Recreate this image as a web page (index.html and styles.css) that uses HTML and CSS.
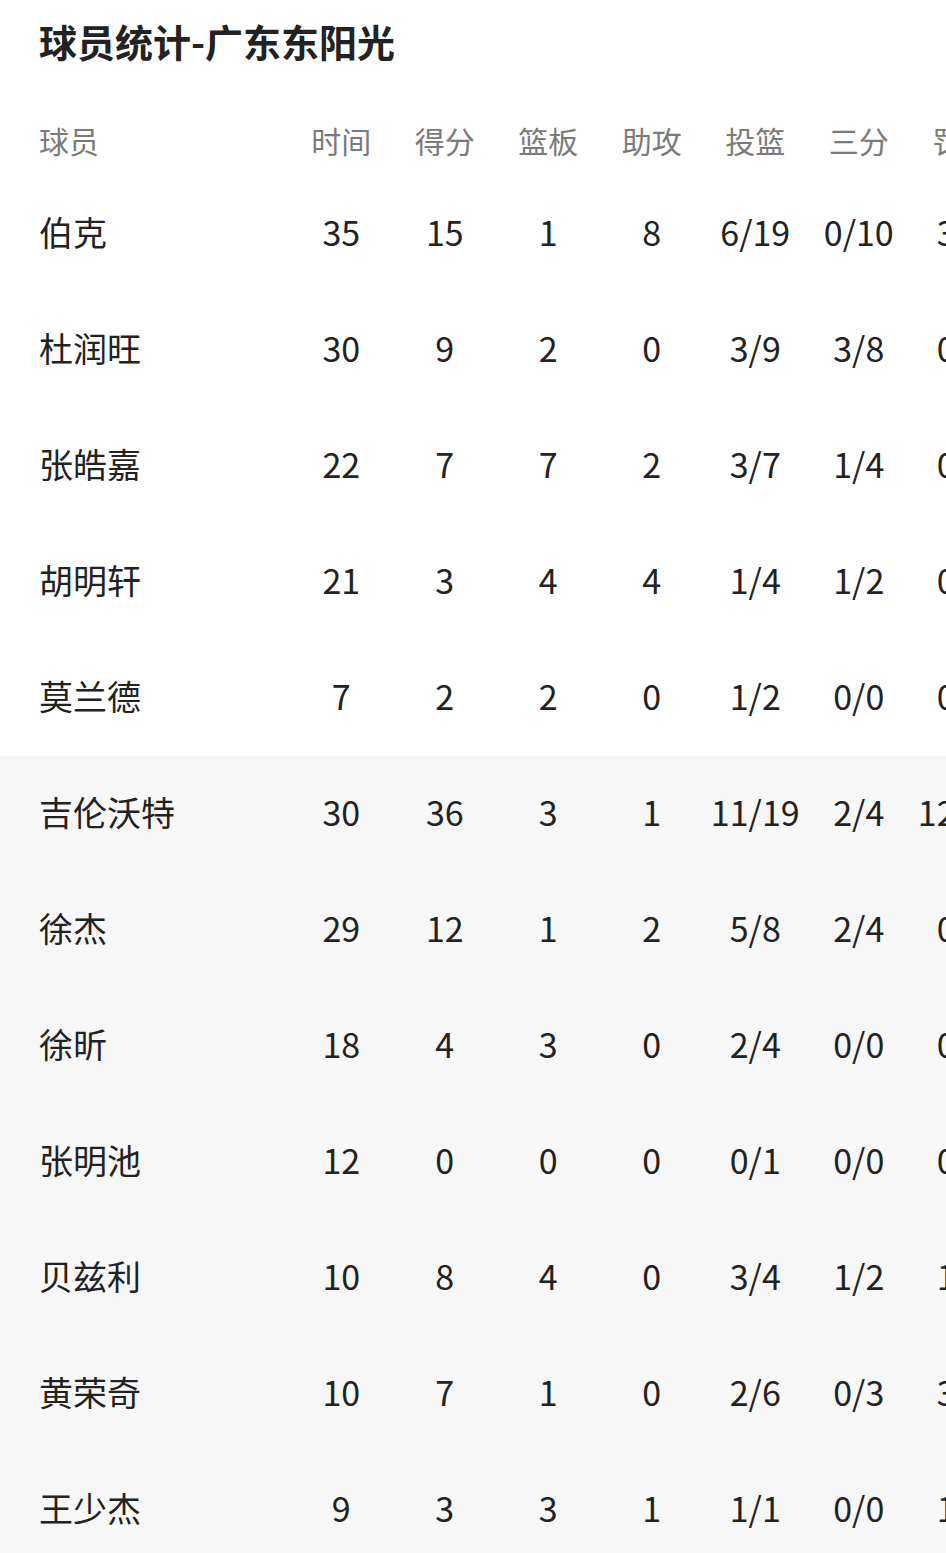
FILE: index.html
```html
<!DOCTYPE html>
<html lang="zh-CN">
<head>
<meta charset="utf-8">
<title>球员统计-广东东阳光</title>
<link rel="stylesheet" href="styles.css">
</head>
<body>
<div class="page">
  <h1 class="title">球员统计-广东东阳光</h1>
  <div class="table">
    <div class="row head">
      <div class="name">球员</div><div>时间</div><div>得分</div><div>篮板</div><div>助攻</div><div>投篮</div><div>三分</div><div>罚球</div>
    </div>
    <div class="row"><div class="name">伯克</div><div>35</div><div>15</div><div>1</div><div>8</div><div>6/19</div><div>0/10</div><div>3/4</div></div>
    <div class="row"><div class="name">杜润旺</div><div>30</div><div>9</div><div>2</div><div>0</div><div>3/9</div><div>3/8</div><div>0/0</div></div>
    <div class="row"><div class="name">张皓嘉</div><div>22</div><div>7</div><div>7</div><div>2</div><div>3/7</div><div>1/4</div><div>0/0</div></div>
    <div class="row"><div class="name">胡明轩</div><div>21</div><div>3</div><div>4</div><div>4</div><div>1/4</div><div>1/2</div><div>0/0</div></div>
    <div class="row"><div class="name">莫兰德</div><div>7</div><div>2</div><div>2</div><div>0</div><div>1/2</div><div>0/0</div><div>0/0</div></div>
    <div class="row bench"><div class="name">吉伦沃特</div><div>30</div><div>36</div><div>3</div><div>1</div><div>11/19</div><div>2/4</div><div>12/14</div></div>
    <div class="row bench"><div class="name">徐杰</div><div>29</div><div>12</div><div>1</div><div>2</div><div>5/8</div><div>2/4</div><div>0/0</div></div>
    <div class="row bench"><div class="name">徐昕</div><div>18</div><div>4</div><div>3</div><div>0</div><div>2/4</div><div>0/0</div><div>0/0</div></div>
    <div class="row bench"><div class="name">张明池</div><div>12</div><div>0</div><div>0</div><div>0</div><div>0/1</div><div>0/0</div><div>0/0</div></div>
    <div class="row bench"><div class="name">贝兹利</div><div>10</div><div>8</div><div>4</div><div>0</div><div>3/4</div><div>1/2</div><div>1/2</div></div>
    <div class="row bench"><div class="name">黄荣奇</div><div>10</div><div>7</div><div>1</div><div>0</div><div>2/6</div><div>0/3</div><div>3/4</div></div>
    <div class="row bench"><div class="name">王少杰</div><div>9</div><div>3</div><div>3</div><div>1</div><div>1/1</div><div>0/0</div><div>1/2</div></div>
  </div>
</div>
</body>
</html>
```

FILE: styles.css
```css
html, body {
  margin: 0;
  padding: 0;
  background: #ffffff;
  overflow: hidden;
}
body {
  font-family: "Noto Sans CJK SC", "Noto Sans", sans-serif;
  color: #222222;
}
.page {
  width: 946px;
  overflow: hidden;
}
.title {
  margin: 16px 0 0 0;
  padding-left: 39px;
  font-size: 38px;
  line-height: 50px;
  font-weight: 700;
  color: #222222;
}
.table {
  margin-top: 42px;
  width: 1100px;
}
.row {
  display: grid;
  grid-template-columns: 250.5px repeat(7, 103.5px);
  align-items: center;
  box-sizing: border-box;
  height: 116px;
  padding: 0 0 4px 39px;
  font-size: 34px;
  line-height: 46px;
  color: #222222;
}
.row > div {
  text-align: center;
  white-space: nowrap;
}
.row > .name {
  text-align: left;
}
.row.head {
  height: 68px;
  padding-bottom: 4px;
  font-size: 30px;
  color: #7a7a7a;
}
.row.bench {
  background: #f7f7f7;
}
```
